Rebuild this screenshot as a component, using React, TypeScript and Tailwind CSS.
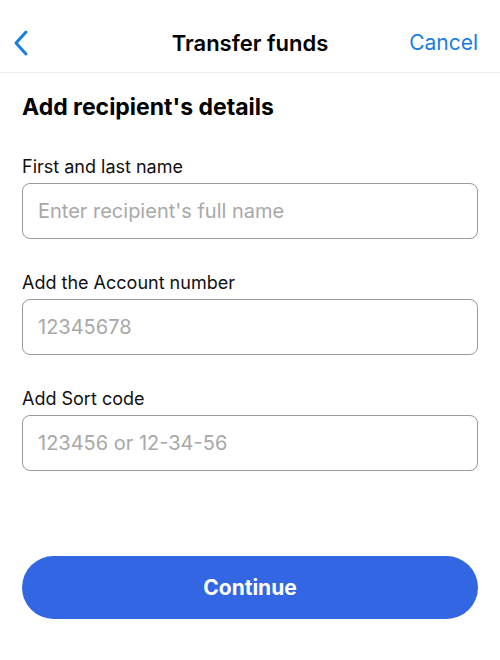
import React from "react";

function Field({ label, placeholder, mt }: { label: string; placeholder: string; mt: string }) {
  return (
    <div className={`flex flex-col ${mt}`}>
      <label className="text-[18px] leading-[22px] text-[#111]">{label}</label>
      <div className="mt-[5px] h-[56px] rounded-[8px] border border-[#9a9a9a] flex items-center px-[15px]">
        <span className="text-[20px] text-[#a8a8a8]">{placeholder}</span>
      </div>
    </div>
  );
}

export default function App() {
  return (
    <div
      className="w-[500px] h-[660px] bg-white flex flex-col"
      style={{ fontFamily: "Inter, 'Noto Sans', sans-serif" }}
    >
      <header className="relative h-[73px] border-b border-[#ececec] flex items-center justify-between pl-[10px] pr-[22px] pt-[14px]">
        <svg width="20" height="28" viewBox="0 0 20 28" fill="none" className="ml-[1px]">
          <path d="M15 3 L5 14 L15 25" stroke="#1a7de0" strokeWidth="3" strokeLinecap="round" strokeLinejoin="round" />
        </svg>
        <div className="absolute left-0 right-0 top-[14px] bottom-0 flex items-center justify-center pointer-events-none">
          <span className="text-[22px] font-semibold text-black">Transfer funds</span>
        </div>
        <span className="text-[21px] text-[#1a7de0]">Cancel</span>
      </header>
      <main className="px-[22px] flex flex-col flex-1">
        <h1 className="mt-[20px] text-[23px] leading-[28px] font-bold text-black">Add recipient's details</h1>
        <Field label="First and last name" placeholder="Enter recipient's full name" mt="mt-[35px]" />
        <Field label="Add the Account number" placeholder="12345678" mt="mt-[33px]" />
        <Field label="Add Sort code" placeholder="123456 or 12-34-56" mt="mt-[33px]" />
        <button className="mt-[85px] h-[63px] w-full rounded-full bg-[#3366e3] text-white text-[21px] font-bold">
          Continue
        </button>
      </main>
    </div>
  );
}
